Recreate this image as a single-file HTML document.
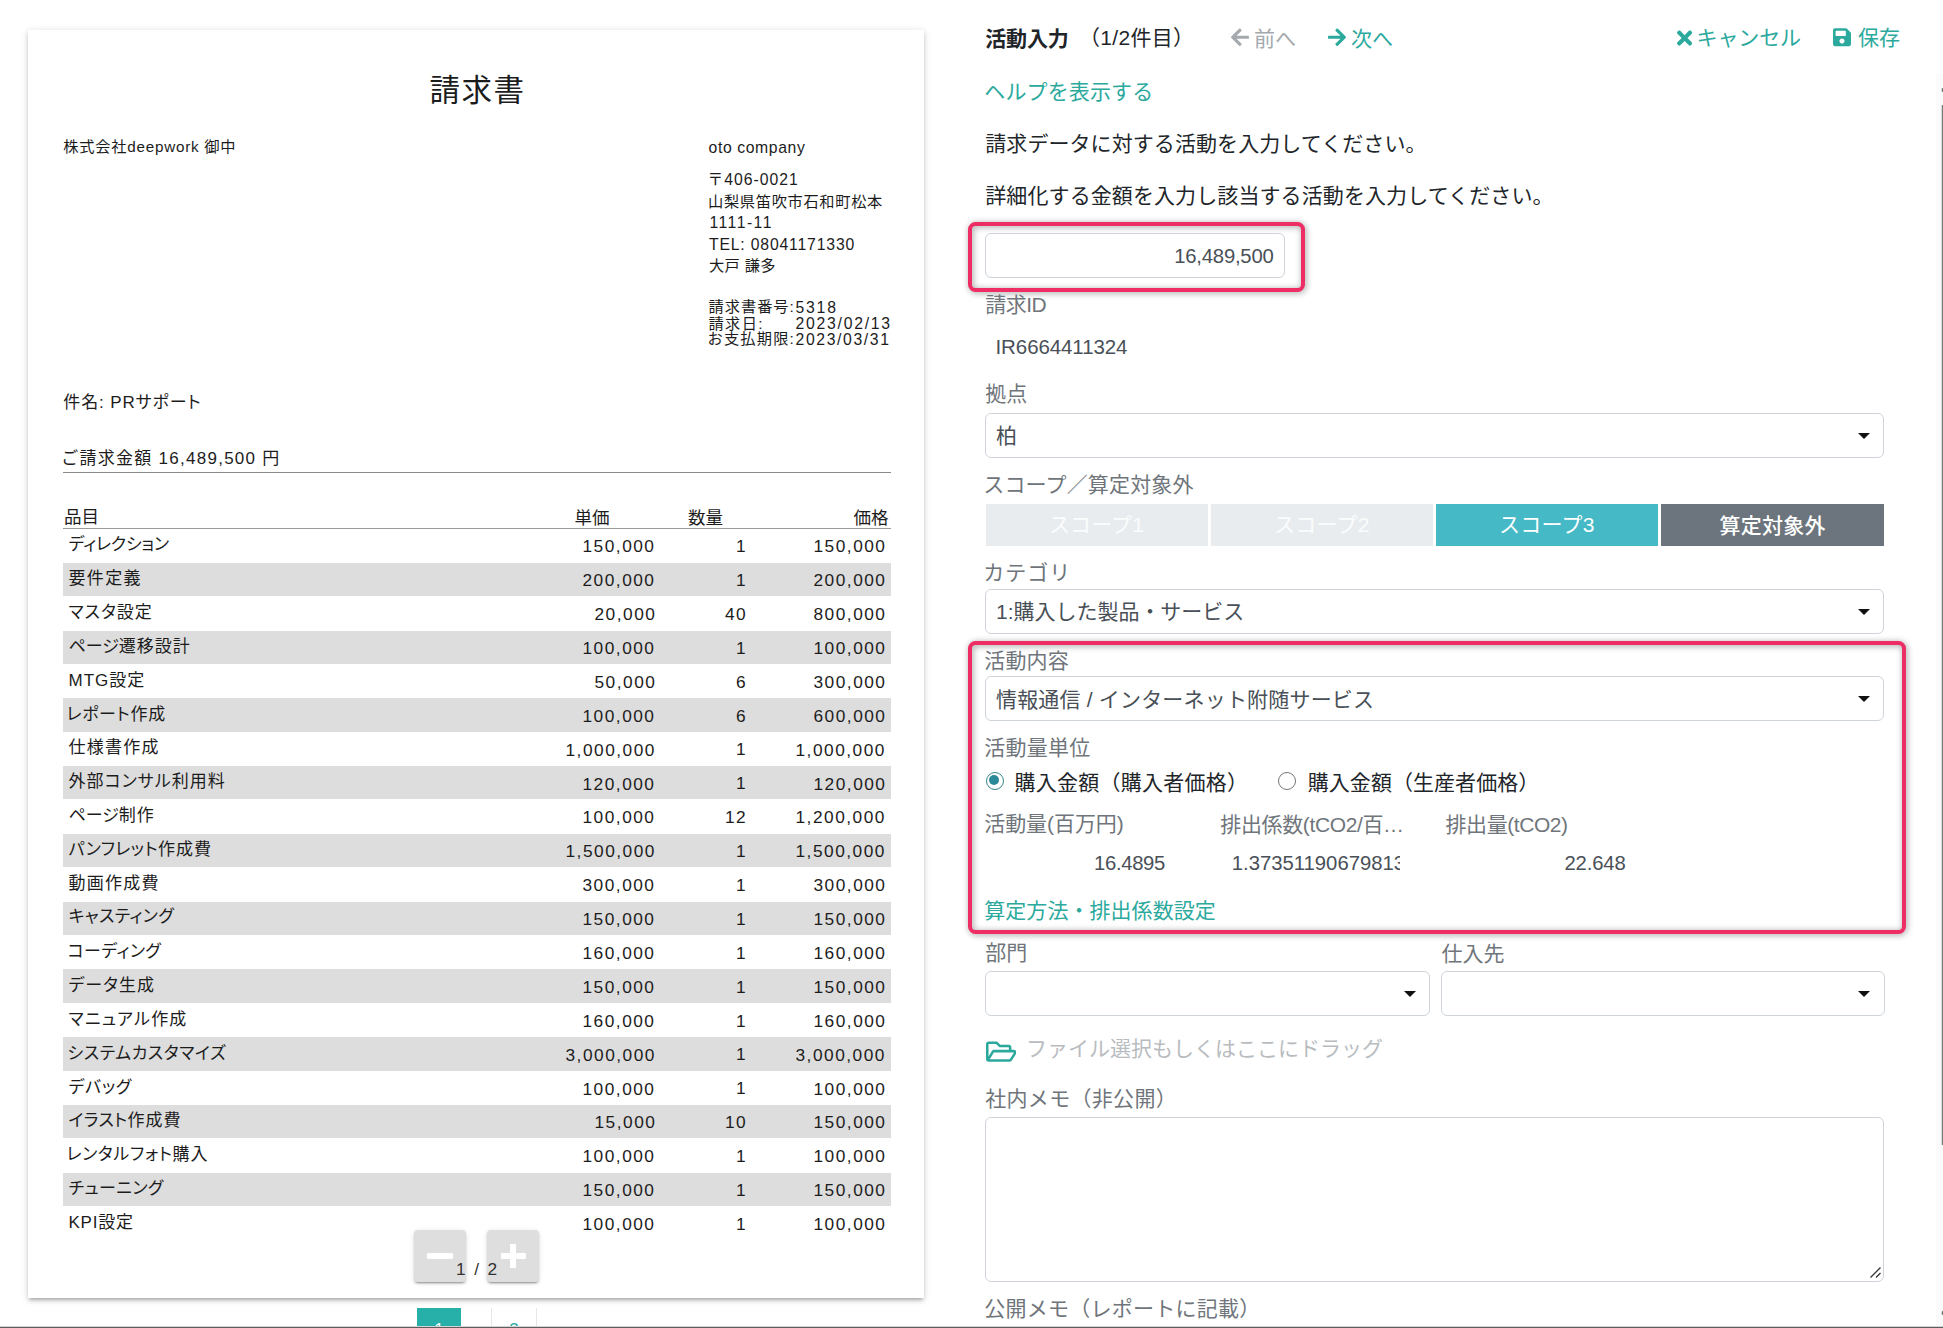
<!DOCTYPE html><html lang="ja"><head><meta charset="utf-8"><title>活動入力</title><style>
*{box-sizing:border-box}
html,body{margin:0;padding:0}
body{width:1943px;height:1328px;overflow:hidden;position:relative;background:#fff;
 font-family:"Liberation Sans","Noto Sans CJK JP",sans-serif;color:#212529}
.a{position:absolute;white-space:nowrap;line-height:1}
.T{position:absolute;white-space:nowrap;line-height:1.2}
#card{position:absolute;left:28px;top:30px;width:896px;height:1268px;background:#fff;
 box-shadow:0 3px 3px -2px rgba(0,0,0,.2),0 3px 4px 0 rgba(0,0,0,.14),0 1px 8px 0 rgba(0,0,0,.12)}
.pdf{color:#1c1c1c}
.row{position:absolute;left:62.5px;width:828px;height:33.3px}
.row.g{background:#dddddd}
.it{font-size:17px;font-feature-settings:"palt"}
.num{font-size:17.3px}
.zb{position:absolute;width:52px;height:52px;background:#dedede;border-radius:4px;
 box-shadow:0 3px 1px -2px rgba(0,0,0,.2),0 2px 2px 0 rgba(0,0,0,.14),0 1px 5px 0 rgba(0,0,0,.12)}
.rp{font-size:20.5px}
.lab{color:#6f757b}
.teal{color:#2ba99d}
.fc{position:absolute;height:45px;border:1px solid #ced4da;border-radius:6px;background:#fff}
.caret{position:absolute;width:0;height:0;border-left:6px solid transparent;border-right:6px solid transparent;border-top:6.5px solid #111}
.val{color:#495057}
.btn{position:absolute;top:504px;height:41.5px;width:222.6px}
.pink{position:absolute;border:4.4px solid #ee2d65;border-radius:7.5px;filter:drop-shadow(1px 1.5px 3.2px rgba(0,0,0,.42))}
</style></head><body>
<div id="card"></div>
<div class="pdf">
<div id="t1" class="T " style="left:429.50px;top:71.78px;font-size:30.5px;letter-spacing:1.500px;">請求書</div>
<div id="t2" class="T " style="left:63.25px;top:138.20px;font-size:15.25px;letter-spacing:0.750px;">株式会社deepwork 御中</div>
<div id="t3" class="T " style="left:708.50px;top:138.85px;font-size:15.75px;letter-spacing:0.620px;">oto company</div>
<div id="t4" class="T " style="left:707.50px;top:171.45px;font-size:15.75px;letter-spacing:1.000px;">〒406-0021</div>
<div id="t5" class="T " style="left:708.00px;top:192.75px;font-size:15.25px;letter-spacing:0.660px;">山梨県笛吹市石和町松本</div>
<div id="t6" class="T " style="left:709.50px;top:213.50px;font-size:15.75px;letter-spacing:1.467px;">1111-11</div>
<div id="t7" class="T " style="left:709.00px;top:236.10px;font-size:15.75px;letter-spacing:0.827px;">TEL: 08041171330</div>
<div id="t8" class="T " style="left:709.00px;top:256.75px;font-size:15.25px;letter-spacing:0.300px;">大戸 謙多</div>
<div id="t9" class="T " style="left:708.50px;top:297.65px;font-size:15.25px;letter-spacing:0.960px;">請求書番号:</div>
<div id="t10" class="T " style="left:795.50px;top:299.15px;font-size:15.75px;letter-spacing:1.800px;">5318</div>
<div id="t11" class="T " style="left:708.50px;top:314.60px;font-size:15.25px;letter-spacing:1.333px;">請求日:</div>
<div id="t12" class="T " style="left:795.50px;top:314.75px;font-size:15.75px;letter-spacing:1.756px;">2023/02/13</div>
<div id="t13" class="T " style="left:707.50px;top:330.40px;font-size:15.25px;letter-spacing:1.160px;">お支払期限:</div>
<div id="t14" class="T " style="left:795.50px;top:330.85px;font-size:15.75px;letter-spacing:1.622px;">2023/03/31</div>
<div id="t15" class="T " style="left:63.25px;top:392.60px;font-size:17px;letter-spacing:0.889px;font-feature-settings:&quot;palt&quot;">件名: PRサポート</div>
<div id="t16" class="T " style="left:61.25px;top:449.23px;font-size:17px;letter-spacing:1.265px;">ご請求金額 16,489,500 円</div>
<div class="a" style="left:62.5px;top:472px;width:828px;height:1px;background:#8a8a8a"></div>
<div id="t17" class="T " style="left:64.00px;top:506.50px;font-size:17.5px;letter-spacing:0.000px;">品目</div>
<div id="t18" class="T " style="left:574.50px;top:508.00px;font-size:17.5px;letter-spacing:0.000px;">単価</div>
<div id="t19" class="T " style="left:688.00px;top:508.00px;font-size:17.5px;letter-spacing:0.000px;">数量</div>
<div id="t20" class="T " style="left:853.50px;top:508.00px;font-size:17.5px;letter-spacing:0.000px;">価格</div>
<div class="a" style="left:62.5px;top:527.5px;width:828px;height:1.5px;background:#9a9a9a"></div>
<div id="it0" class="T it" style="left:68.50px;top:534.70px;font-size:17px;letter-spacing:1.000px;"><span style="letter-spacing:-0.167px">ディレクション</span></div>
<div id="n0_0" class="T num" style="left:582.50px;top:536.34px;font-size:17.3px;letter-spacing:1.500px;">150,000</div>
<div id="n0_1" class="T num" style="left:736.00px;top:536.34px;font-size:17.3px;letter-spacing:1.500px;">1</div>
<div id="n0_2" class="T num" style="left:813.50px;top:536.34px;font-size:17.3px;letter-spacing:1.500px;">150,000</div>
<div class="row g" style="top:562.79px"></div>
<div id="it1" class="T it" style="left:68.50px;top:569.48px;font-size:17px;letter-spacing:1.333px;">要件定義</div>
<div id="n1_0" class="T num" style="left:582.50px;top:570.23px;font-size:17.3px;letter-spacing:1.500px;">200,000</div>
<div id="n1_1" class="T num" style="left:736.00px;top:570.23px;font-size:17.3px;letter-spacing:1.500px;">1</div>
<div id="n1_2" class="T num" style="left:813.50px;top:570.23px;font-size:17.3px;letter-spacing:1.500px;">200,000</div>
<div id="it2" class="T it" style="left:68.50px;top:603.26px;font-size:17px;letter-spacing:1.000px;"><span style="letter-spacing:1.000px">マスタ</span>設定</div>
<div id="n2_0" class="T num" style="left:594.50px;top:604.12px;font-size:17.3px;letter-spacing:1.500px;">20,000</div>
<div id="n2_1" class="T num" style="left:725.00px;top:604.12px;font-size:17.3px;letter-spacing:1.500px;">40</div>
<div id="n2_2" class="T num" style="left:813.50px;top:604.12px;font-size:17.3px;letter-spacing:1.500px;">800,000</div>
<div class="row g" style="top:630.57px"></div>
<div id="it3" class="T it" style="left:68.50px;top:637.04px;font-size:17px;letter-spacing:1.000px;"><span style="letter-spacing:0.000px">ページ</span>遷移設計</div>
<div id="n3_0" class="T num" style="left:582.50px;top:638.01px;font-size:17.3px;letter-spacing:1.500px;">100,000</div>
<div id="n3_1" class="T num" style="left:736.00px;top:638.01px;font-size:17.3px;letter-spacing:1.500px;">1</div>
<div id="n3_2" class="T num" style="left:813.50px;top:638.01px;font-size:17.3px;letter-spacing:1.500px;">100,000</div>
<div id="it4" class="T it" style="left:68.50px;top:670.82px;font-size:17px;letter-spacing:1.000px;">MTG設定</div>
<div id="n4_0" class="T num" style="left:594.50px;top:671.90px;font-size:17.3px;letter-spacing:1.500px;">50,000</div>
<div id="n4_1" class="T num" style="left:736.00px;top:671.90px;font-size:17.3px;letter-spacing:1.500px;">6</div>
<div id="n4_2" class="T num" style="left:813.50px;top:671.90px;font-size:17.3px;letter-spacing:1.500px;">300,000</div>
<div class="row g" style="top:698.35px"></div>
<div id="it5" class="T it" style="left:66.50px;top:704.60px;font-size:17px;letter-spacing:1.000px;"><span style="letter-spacing:0.667px">レポート</span>作成</div>
<div id="n5_0" class="T num" style="left:582.50px;top:705.79px;font-size:17.3px;letter-spacing:1.500px;">100,000</div>
<div id="n5_1" class="T num" style="left:736.00px;top:705.79px;font-size:17.3px;letter-spacing:1.500px;">6</div>
<div id="n5_2" class="T num" style="left:813.50px;top:705.79px;font-size:17.3px;letter-spacing:1.500px;">600,000</div>
<div id="it6" class="T it" style="left:68.50px;top:738.38px;font-size:17px;letter-spacing:1.250px;">仕様書作成</div>
<div id="n6_0" class="T num" style="left:565.50px;top:739.68px;font-size:17.3px;letter-spacing:1.500px;">1,000,000</div>
<div id="n6_1" class="T num" style="left:736.00px;top:739.02px;font-size:17.3px;letter-spacing:1.500px;">1</div>
<div id="n6_2" class="T num" style="left:795.50px;top:739.68px;font-size:17.3px;letter-spacing:1.500px;">1,000,000</div>
<div class="row g" style="top:766.13px"></div>
<div id="it7" class="T it" style="left:68.50px;top:772.16px;font-size:17px;letter-spacing:1.000px;">外部<span style="letter-spacing:1.000px">コンサル</span>利用料</div>
<div id="n7_0" class="T num" style="left:582.50px;top:773.57px;font-size:17.3px;letter-spacing:1.500px;">120,000</div>
<div id="n7_1" class="T num" style="left:736.00px;top:772.80px;font-size:17.3px;letter-spacing:1.500px;">1</div>
<div id="n7_2" class="T num" style="left:813.50px;top:773.57px;font-size:17.3px;letter-spacing:1.500px;">120,000</div>
<div id="it8" class="T it" style="left:68.50px;top:805.94px;font-size:17px;letter-spacing:1.000px;"><span style="letter-spacing:0.000px">ページ</span>制作</div>
<div id="n8_0" class="T num" style="left:582.50px;top:807.46px;font-size:17.3px;letter-spacing:1.500px;">100,000</div>
<div id="n8_1" class="T num" style="left:725.00px;top:807.46px;font-size:17.3px;letter-spacing:1.500px;">12</div>
<div id="n8_2" class="T num" style="left:795.50px;top:807.46px;font-size:17.3px;letter-spacing:1.500px;">1,200,000</div>
<div class="row g" style="top:833.91px"></div>
<div id="it9" class="T it" style="left:68.50px;top:839.72px;font-size:17px;letter-spacing:1.000px;"><span style="letter-spacing:0.400px">パンフレット</span>作成費</div>
<div id="n9_0" class="T num" style="left:565.50px;top:841.35px;font-size:17.3px;letter-spacing:1.500px;">1,500,000</div>
<div id="n9_1" class="T num" style="left:736.00px;top:841.35px;font-size:17.3px;letter-spacing:1.500px;">1</div>
<div id="n9_2" class="T num" style="left:795.50px;top:841.35px;font-size:17.3px;letter-spacing:1.500px;">1,500,000</div>
<div id="it10" class="T it" style="left:68.50px;top:873.50px;font-size:17px;letter-spacing:1.250px;">動画作成費</div>
<div id="n10_0" class="T num" style="left:582.50px;top:875.24px;font-size:17.3px;letter-spacing:1.500px;">300,000</div>
<div id="n10_1" class="T num" style="left:736.00px;top:875.24px;font-size:17.3px;letter-spacing:1.500px;">1</div>
<div id="n10_2" class="T num" style="left:813.50px;top:875.24px;font-size:17.3px;letter-spacing:1.500px;">300,000</div>
<div class="row g" style="top:901.69px"></div>
<div id="it11" class="T it" style="left:68.50px;top:907.17px;font-size:17px;letter-spacing:1.000px;"><span style="letter-spacing:0.333px">キャスティング</span></div>
<div id="n11_0" class="T num" style="left:582.50px;top:909.13px;font-size:17.3px;letter-spacing:1.500px;">150,000</div>
<div id="n11_1" class="T num" style="left:736.00px;top:909.13px;font-size:17.3px;letter-spacing:1.500px;">1</div>
<div id="n11_2" class="T num" style="left:813.50px;top:909.13px;font-size:17.3px;letter-spacing:1.500px;">150,000</div>
<div id="it12" class="T it" style="left:67.50px;top:942.06px;font-size:17px;letter-spacing:1.000px;"><span style="letter-spacing:0.400px">コーディング</span></div>
<div id="n12_0" class="T num" style="left:582.50px;top:943.02px;font-size:17.3px;letter-spacing:1.500px;">160,000</div>
<div id="n12_1" class="T num" style="left:736.00px;top:943.02px;font-size:17.3px;letter-spacing:1.500px;">1</div>
<div id="n12_2" class="T num" style="left:813.50px;top:943.02px;font-size:17.3px;letter-spacing:1.500px;">160,000</div>
<div class="row g" style="top:969.47px"></div>
<div id="it13" class="T it" style="left:68.50px;top:976.34px;font-size:17px;letter-spacing:1.000px;"><span style="letter-spacing:1.000px">データ</span>生成</div>
<div id="n13_0" class="T num" style="left:582.50px;top:976.91px;font-size:17.3px;letter-spacing:1.500px;">150,000</div>
<div id="n13_1" class="T num" style="left:736.00px;top:976.91px;font-size:17.3px;letter-spacing:1.500px;">1</div>
<div id="n13_2" class="T num" style="left:813.50px;top:976.91px;font-size:17.3px;letter-spacing:1.500px;">150,000</div>
<div id="it14" class="T it" style="left:68.50px;top:1009.62px;font-size:17px;letter-spacing:1.000px;"><span style="letter-spacing:1.250px">マニュアル</span>作成</div>
<div id="n14_0" class="T num" style="left:582.50px;top:1010.80px;font-size:17.3px;letter-spacing:1.500px;">160,000</div>
<div id="n14_1" class="T num" style="left:736.00px;top:1010.80px;font-size:17.3px;letter-spacing:1.500px;">1</div>
<div id="n14_2" class="T num" style="left:813.50px;top:1010.80px;font-size:17.3px;letter-spacing:1.500px;">160,000</div>
<div class="row g" style="top:1037.25px"></div>
<div id="it15" class="T it" style="left:67.50px;top:1043.90px;font-size:17px;letter-spacing:1.000px;"><span style="letter-spacing:0.556px">システムカスタマイズ</span></div>
<div id="n15_0" class="T num" style="left:565.50px;top:1044.69px;font-size:17.3px;letter-spacing:1.500px;">3,000,000</div>
<div id="n15_1" class="T num" style="left:736.00px;top:1044.04px;font-size:17.3px;letter-spacing:1.500px;">1</div>
<div id="n15_2" class="T num" style="left:795.50px;top:1044.69px;font-size:17.3px;letter-spacing:1.500px;">3,000,000</div>
<div id="it16" class="T it" style="left:68.50px;top:1077.68px;font-size:17px;letter-spacing:1.000px;"><span style="letter-spacing:0.667px">デバッグ</span></div>
<div id="n16_0" class="T num" style="left:582.50px;top:1078.58px;font-size:17.3px;letter-spacing:1.500px;">100,000</div>
<div id="n16_1" class="T num" style="left:736.00px;top:1077.82px;font-size:17.3px;letter-spacing:1.500px;">1</div>
<div id="n16_2" class="T num" style="left:813.50px;top:1078.58px;font-size:17.3px;letter-spacing:1.500px;">100,000</div>
<div class="row g" style="top:1105.03px"></div>
<div id="it17" class="T it" style="left:68.50px;top:1110.96px;font-size:17px;letter-spacing:1.000px;"><span style="letter-spacing:0.333px">イラスト</span>作成費</div>
<div id="n17_0" class="T num" style="left:594.50px;top:1112.47px;font-size:17.3px;letter-spacing:1.500px;">15,000</div>
<div id="n17_1" class="T num" style="left:725.00px;top:1112.47px;font-size:17.3px;letter-spacing:1.500px;">10</div>
<div id="n17_2" class="T num" style="left:813.50px;top:1112.47px;font-size:17.3px;letter-spacing:1.500px;">150,000</div>
<div id="it18" class="T it" style="left:66.50px;top:1144.74px;font-size:17px;letter-spacing:1.000px;"><span style="letter-spacing:0.667px">レンタルフォト</span>購入</div>
<div id="n18_0" class="T num" style="left:582.50px;top:1146.36px;font-size:17.3px;letter-spacing:1.500px;">100,000</div>
<div id="n18_1" class="T num" style="left:736.00px;top:1146.36px;font-size:17.3px;letter-spacing:1.500px;">1</div>
<div id="n18_2" class="T num" style="left:813.50px;top:1146.36px;font-size:17.3px;letter-spacing:1.500px;">100,000</div>
<div class="row g" style="top:1172.81px"></div>
<div id="it19" class="T it" style="left:68.50px;top:1179.02px;font-size:17px;letter-spacing:1.000px;"><span style="letter-spacing:0.400px">チューニング</span></div>
<div id="n19_0" class="T num" style="left:582.50px;top:1180.25px;font-size:17.3px;letter-spacing:1.500px;">150,000</div>
<div id="n19_1" class="T num" style="left:736.00px;top:1180.25px;font-size:17.3px;letter-spacing:1.500px;">1</div>
<div id="n19_2" class="T num" style="left:813.50px;top:1180.25px;font-size:17.3px;letter-spacing:1.500px;">150,000</div>
<div id="it20" class="T it" style="left:68.50px;top:1213.30px;font-size:17px;letter-spacing:0.750px;">KPI設定</div>
<div id="n20_0" class="T num" style="left:582.50px;top:1214.14px;font-size:17.3px;letter-spacing:1.500px;">100,000</div>
<div id="n20_1" class="T num" style="left:736.00px;top:1214.14px;font-size:17.3px;letter-spacing:1.500px;">1</div>
<div id="n20_2" class="T num" style="left:813.50px;top:1214.14px;font-size:17.3px;letter-spacing:1.500px;">100,000</div>
</div>
<div class="zb" style="left:414px;top:1230px"><div style="position:absolute;left:13px;top:22.5px;width:25.5px;height:6.5px;background:#fff;border-radius:1px"></div></div>
<div class="zb" style="left:487px;top:1230px"><div style="position:absolute;left:13.5px;top:23px;width:25.5px;height:6px;background:#fff;border-radius:1px"></div><div style="position:absolute;left:23.2px;top:14px;width:6px;height:24px;background:#fff;border-radius:1px"></div></div>
<div id="t105" class="T " style="left:456.00px;top:1259.04px;font-size:17.3px;letter-spacing:1.900px;color:#333">1 / 2</div>
<div class="a" style="left:417px;top:1308px;width:44px;height:30px;background:#26b0a9;color:#fff;font-size:17px;text-align:center;padding-top:13px">1</div>
<div class="a teal" style="left:491px;top:1308px;width:46px;height:30px;border-left:1px solid #e6e6e6;border-right:1px solid #e6e6e6;font-size:17px;text-align:center;padding-top:13px">2</div>
<div class="rp">
<div id="t106" class="T " style="left:985.25px;top:25.80px;font-size:21px;letter-spacing:-0.167px;font-weight:700">活動入力</div>
<div id="t107" class="T " style="left:1078.90px;top:24.80px;font-size:21px;letter-spacing:0.333px;">（1/2件目）</div>
<svg class="a" style="left:1231px;top:27.4px" width="18" height="20.5" viewBox="0 0 448 512"><path fill="#a4a9ae" d="M257.5 445.1l-22.2 22.2c-9.4 9.4-24.6 9.4-33.9 0L7 273c-9.4-9.4-9.4-24.6 0-33.900L201.400 44.700c9.400-9.400 24.600-9.400 33.900 0l22.200 22.200c9.500 9.500 9.300 25-.400 34.300L136.600 216H424c13.300 0 24 10.700 24 24v32c0 13.300-10.700 24-24 24H136.600l120.500 114.800c9.800 9.300 10 24.800.400 34.300z"/></svg>
<div id="t108" class="T " style="left:1254.00px;top:25.55px;font-size:21px;letter-spacing:0.000px;color:#a4a9ae">前へ</div>
<svg class="a" style="left:1328px;top:27.4px;transform:scaleX(-1)" width="18" height="20.5" viewBox="0 0 448 512"><path fill="#2ba99d" d="M257.5 445.1l-22.2 22.2c-9.4 9.4-24.6 9.4-33.9 0L7 273c-9.4-9.4-9.4-24.6 0-33.900L201.400 44.700c9.400-9.400 24.600-9.400 33.900 0l22.200 22.200c9.500 9.500 9.300 25-.400 34.300L136.600 216H424c13.300 0 24 10.700 24 24v32c0 13.300-10.700 24-24 24H136.600l120.500 114.800c9.800 9.300 10 24.800.400 34.300z"/></svg>
<div id="t109" class="T teal" style="left:1351.00px;top:25.55px;font-size:21px;letter-spacing:0.000px;">次へ</div>
<svg class="a" style="left:1676.6px;top:26.6px" width="15.2" height="22.1" viewBox="0 0 352 512"><path fill="#2ba99d" d="M242.720 256l100.070-100.070c12.280-12.280 12.280-32.190 0-44.480l-22.240-22.240c-12.280-12.280-32.190-12.280-44.480 0L176 189.280 75.930 89.210c-12.280-12.280-32.190-12.280-44.480 0L9.210 111.450c-12.280 12.280-12.280 32.190 0 44.480L109.280 256 9.210 356.070c-12.280 12.280-12.280 32.190 0 44.480l22.240 22.240c12.280 12.280 32.200 12.280 44.480 0L176 322.720l100.070 100.070c12.280 12.280 32.200 12.280 44.480 0l22.240-22.240c12.280-12.280 12.280-32.190 0-44.480L242.720 256z"/></svg>
<div id="t110" class="T teal" style="left:1696.50px;top:25.40px;font-size:21px;letter-spacing:-0.100px;">キャンセル</div>
<svg class="a" style="left:1832.5px;top:27.4px" width="18" height="20.500" viewBox="0 0 448 512"><path fill="#2ba99d" d="M433.941 129.941l-83.882-83.882A48 48 0 0 0 316.118 32H48C21.490 32 0 53.490 0 80v352c0 26.510 21.490 48 48 48h352c26.510 0 48-21.490 48-48V163.882a48 48 0 0 0-14.059-33.941zM224 416c-35.346 0-64-28.654-64-64 0-35.346 28.654-64 64-64s64 28.654 64 64c0 35.346-28.654 64-64 64zm96-304.520V212c0 6.627-5.373 12-12 12H76c-6.627 0-12-5.373-12-12V108c0-6.627 5.373-12 12-12h228.520c3.183 0 6.235 1.264 8.485 3.515l3.480 3.480A11.996 11.996 0 0 1 320 111.480z"/></svg>
<div id="t111" class="T teal" style="left:1858.00px;top:24.75px;font-size:21px;letter-spacing:0.000px;">保存</div>
<div id="t112" class="T teal" style="left:984.25px;top:79.05px;font-size:21px;letter-spacing:0.143px;">ヘルプを表示する</div>
<div id="t113" class="T " style="left:985.25px;top:130.80px;font-size:21px;letter-spacing:0.075px;">請求データに対する活動を入力してください。</div>
<div id="t114" class="T " style="left:985.25px;top:182.55px;font-size:21px;letter-spacing:0.096px;">詳細化する金額を入力し該当する活動を入力してください。</div>
<div class="pink" style="left:967.8px;top:221.5px;width:337px;height:70.2px"></div>
<div class="fc" style="left:985px;top:233.25px;width:299.5px"></div>
<div id="t115" class="T val" style="left:1174.25px;top:243.69px;font-size:20.3px;letter-spacing:-0.222px;">16,489,500</div>
<div id="t116" class="T lab" style="left:985.25px;top:292.05px;font-size:21px;letter-spacing:-0.500px;">請求ID</div>
<div id="t117" class="T val" style="left:995.50px;top:335.15px;font-size:20.5px;letter-spacing:-0.091px;">IR6664411324</div>
<div id="t118" class="T lab" style="left:985.25px;top:380.80px;font-size:21px;letter-spacing:0.000px;">拠点</div>
<div class="fc" style="left:985px;top:413.25px;width:899.3px"></div><div class="caret" style="left:1858px;top:433px"></div>
<div id="t119" class="T val" style="left:996.00px;top:422.80px;font-size:21px;letter-spacing:0.000px;">柏</div>
<div id="t120" class="T lab" style="left:983.25px;top:471.68px;font-size:21px;letter-spacing:0.167px;">スコープ／算定対象外</div>
<div class="btn" style="left:985.75px;background:#e9ecef"></div>
<div class="btn" style="left:1210.75px;background:#e9ecef"></div>
<div class="btn" style="left:1435.75px;background:#45b9c5"></div>
<div class="btn" style="left:1661.1px;background:#6c757d"></div>
<div id="t121" class="T " style="left:1049.00px;top:512.05px;font-size:21px;letter-spacing:0.125px;color:#fbfcfc">スコープ1</div>
<div id="t122" class="T " style="left:1274.00px;top:512.05px;font-size:21px;letter-spacing:0.250px;color:#fbfcfc">スコープ2</div>
<div id="t123" class="T " style="left:1499.00px;top:512.05px;font-size:21px;letter-spacing:0.250px;color:#fff">スコープ3</div>
<div id="t124" class="T " style="left:1719.50px;top:512.80px;font-size:21px;letter-spacing:0.250px;color:#fff;font-weight:500">算定対象外</div>
<div id="t125" class="T lab" style="left:983.25px;top:559.55px;font-size:21px;letter-spacing:1.000px;">カテゴリ</div>
<div class="fc" style="left:985px;top:589.4px;width:899.3px"></div><div class="caret" style="left:1858px;top:609px"></div>
<div id="t126" class="T val" style="left:996.00px;top:598.80px;font-size:21px;letter-spacing:-0.017px;">1:購入した製品・サービス</div>
<div class="pink" style="left:967.8px;top:640.5px;width:938.6px;height:293px"></div>
<div id="t127" class="T lab" style="left:984.25px;top:647.80px;font-size:21px;letter-spacing:0.167px;">活動内容</div>
<div class="fc" style="left:985px;top:676.4px;width:899.3px"></div><div class="caret" style="left:1858px;top:696px"></div>
<div id="t128" class="T val" style="left:996.00px;top:686.67px;font-size:21px;letter-spacing:0.184px;">情報通信 / インターネット附随サービス</div>
<div id="t129" class="T lab" style="left:984.25px;top:734.80px;font-size:21px;letter-spacing:0.250px;">活動量単位</div>
<div class="a" style="left:986px;top:772px;width:18px;height:18px;border-radius:50%;border:1.9px solid #36858a;background:#fff"><div style="position:absolute;left:1.9px;top:1.9px;width:10.4px;height:10.4px;border-radius:50%;background:#2b899a"></div></div>
<div id="t130" class="T " style="left:1014.50px;top:769.80px;font-size:21px;letter-spacing:0.250px;">購入金額（購入者価格）</div>
<div class="a" style="left:1277.5px;top:772px;width:18px;height:18px;border-radius:50%;border:1.500px solid #767676;background:#fff"></div>
<div id="t131" class="T " style="left:1307.75px;top:769.80px;font-size:21px;letter-spacing:0.050px;">購入金額（生産者価格）</div>
<div id="t132" class="T lab" style="left:984.25px;top:810.80px;font-size:21px;letter-spacing:-0.071px;">活動量(百万円)</div>
<div id="t133" class="T lab" style="left:1220.25px;top:811.55px;font-size:21px;letter-spacing:-0.364px;">排出係数(tCO2/百…</div>
<div id="t134" class="T lab" style="left:1445.50px;top:811.55px;font-size:21px;letter-spacing:-0.425px;">排出量(tCO2)</div>
<div id="t135" class="T val" style="left:1094.00px;top:850.94px;font-size:20.3px;letter-spacing:-0.333px;">16.4895</div>
<div id="t136" class="T val" style="left:1231.75px;top:850.94px;font-size:20.3px;letter-spacing:0.000px;width:168px;overflow:hidden">1.37351190679813</div>
<div id="t137" class="T val" style="left:1564.50px;top:850.94px;font-size:20.3px;letter-spacing:-0.160px;">22.648</div>
<div id="t138" class="T teal" style="left:984.25px;top:898.17px;font-size:21px;letter-spacing:0.050px;">算定方法・排出係数設定</div>
<div id="t139" class="T lab" style="left:985.25px;top:939.55px;font-size:21px;letter-spacing:0.000px;">部門</div>
<div id="t140" class="T lab" style="left:1441.50px;top:941.00px;font-size:21px;letter-spacing:0.000px;">仕入先</div>
<div class="fc" style="left:985px;top:971.3px;width:445.3px"></div><div class="caret" style="left:1404px;top:991.300px"></div>
<div class="fc" style="left:1441px;top:971.3px;width:443.6px"></div><div class="caret" style="left:1858.3px;top:991.300px"></div>
<svg class="a" style="left:985.75px;top:1037.500px" width="30.5" height="27.1" viewBox="0 0 576 512"><path fill="#2ba99d" d="M527.900 224H480v-48c0-26.500-21.500-48-48-48H272l-64-64H48C21.500 64 0 85.500 0 112v288c0 26.500 21.500 48 48 48h400c16.500 0 31.900-8.500 40.700-22.600l79.900-128c20-31.900-3-73.400-40.700-73.400zM48 118c0-3.300 2.700-6 6-6h134.100l64 64H426c3.300 0 6 2.700 6 6v42H152c-16.800 0-32.400 8.800-41.100 23.200L48 351.400zm400 282H72l77.200-128H528z"/></svg>
<div id="t141" class="T " style="left:1026.00px;top:1035.55px;font-size:21px;letter-spacing:0.000px;color:#b9bcbf">ファイル選択もしくはここにドラッグ</div>
<div id="t142" class="T lab" style="left:985.25px;top:1085.80px;font-size:21px;letter-spacing:0.312px;">社内メモ（非公開）</div>
<div class="fc" style="left:985px;top:1117.25px;width:899.3px;height:165px"></div>
<svg class="a" style="left:1868px;top:1265px" width="14" height="14" viewBox="0 0 14 14"><path d="M12.500 2.500L2.500 12.500M12.500 8L8 12.500" stroke="#333" stroke-width="1.3" fill="none"/></svg>
<div id="t143" class="T lab" style="left:984.25px;top:1295.80px;font-size:21px;letter-spacing:0.250px;">公開メモ（レポートに記載）</div>
</div>
<div class="a" style="left:1936px;top:74px;width:7px;height:1254px;background:#fbfbfb"></div>
<div class="a" style="left:1941px;top:105px;width:2px;height:1040px;background:linear-gradient(90deg,#d9d9d9 0,#d9d9d9 50%,#7c7c7c 50%,#7c7c7c 100%)"></div>
<div class="a" style="left:1941px;top:88px;width:2px;height:4px;background:linear-gradient(90deg,#cfcfcf 0,#cfcfcf 50%,#6e6e6e 50%,#6e6e6e 100%);border-radius:2px 0 0 2px"></div>
<div class="a" style="left:1941px;top:1311px;width:2px;height:4px;background:linear-gradient(90deg,#cfcfcf 0,#cfcfcf 50%,#6e6e6e 50%,#6e6e6e 100%);border-radius:2px 0 0 2px"></div>
<div class="a" style="left:0;top:1326px;width:1943px;height:2px;background:linear-gradient(#d4d4d4 0,#d4d4d4 50%,#5e5e5e 50%,#5e5e5e 100%)"></div>
</body></html>
